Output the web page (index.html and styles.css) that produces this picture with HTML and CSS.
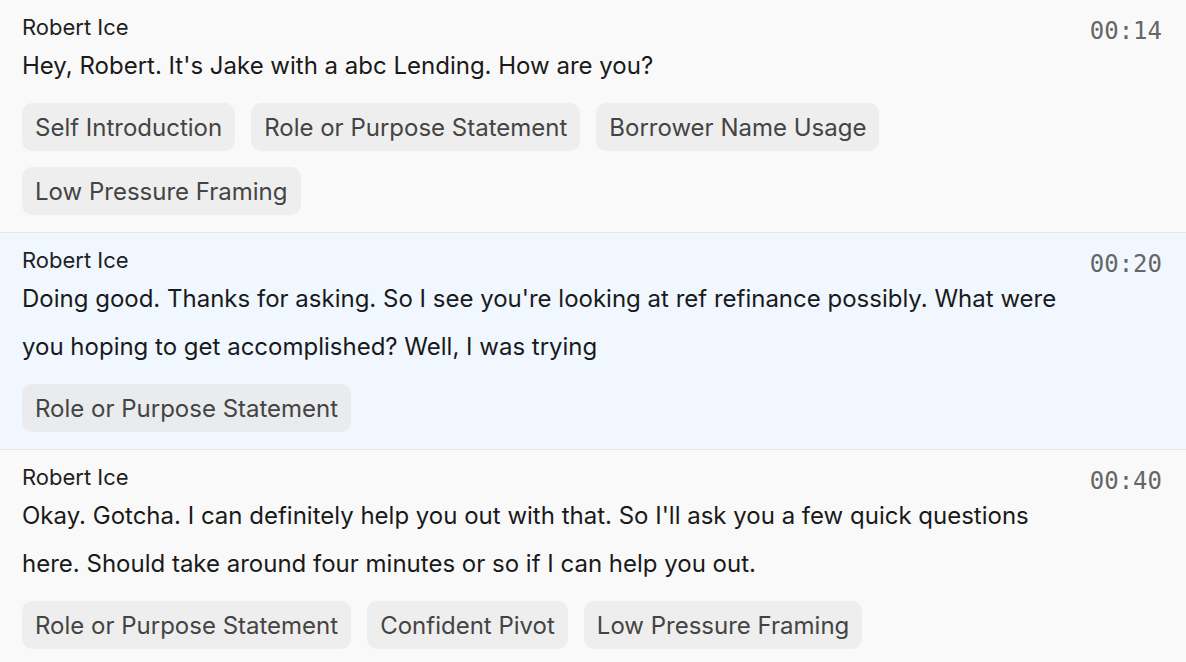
FILE: index.html
```html
<!DOCTYPE html>
<html lang="en">
<head>
<meta charset="utf-8">
<title>Transcript</title>
<link rel="stylesheet" href="styles.css">
</head>
<body>
<div class="transcript">
  <section class="turn">
    <div class="turn-main">
      <div class="speaker">Robert Ice</div>
      <p class="utterance">Hey, Robert. It's Jake with a abc Lending. How are you?</p>
      <div class="tags">
        <span class="tag">Self Introduction</span>
        <span class="tag">Role or Purpose Statement</span>
        <span class="tag">Borrower Name Usage</span>
        <span class="tag">Low Pressure Framing</span>
      </div>
    </div>
    <div class="time">00:14</div>
  </section>
  <section class="turn active">
    <div class="turn-main">
      <div class="speaker">Robert Ice</div>
      <p class="utterance">Doing good. Thanks for asking. So I see you're looking at ref refinance possibly. What were you hoping to get accomplished? Well, I was trying</p>
      <div class="tags">
        <span class="tag">Role or Purpose Statement</span>
      </div>
    </div>
    <div class="time">00:20</div>
  </section>
  <section class="turn">
    <div class="turn-main">
      <div class="speaker">Robert Ice</div>
      <p class="utterance">Okay. Gotcha. I can definitely help you out with that. So I'll ask you a few quick questions here. Should take around four minutes or so if I can help you out.</p>
      <div class="tags">
        <span class="tag">Role or Purpose Statement</span>
        <span class="tag">Confident Pivot</span>
        <span class="tag">Low Pressure Framing</span>
      </div>
    </div>
    <div class="time">00:40</div>
  </section>
</div>
</body>
</html>
```
FILE: styles.css
```css
* { box-sizing: border-box; }
html, body { margin: 0; padding: 0; }
body {
  background: #f9f9f9;
  font-family: Inter, "Noto Sans", sans-serif;
  color: #1a1a1a;
}
.transcript { display: flex; flex-direction: column; }
.turn {
  display: flex;
  gap: 24px;
  padding: 14px 24px 17px 22px;
  border-bottom: 1px solid #e8e8e8;
  background: #f9f9f9;
}
.turn.active { background: #f0f7ff; }
.turn-main { flex: 1; min-width: 0; }
.speaker {
  font-size: 22px;
  line-height: 26px;
  color: #1f1f1f;
}
.utterance {
  margin: 2px 0 0;
  font-size: 24px;
  line-height: 48px;
  color: #1a1a1a;
}
.tags {
  display: flex;
  flex-wrap: wrap;
  gap: 16px;
  margin-top: 13px;
}
.tag {
  display: inline-flex;
  align-items: center;
  height: 48px;
  padding: 0 13px;
  border-radius: 10px;
  background: #eeeeee;
  color: #444444;
  font-size: 24px;
}
.active .tag { background: #e9ebed; }
.time {
  font-family: "DejaVu Sans Mono", "Liberation Mono", monospace;
  font-size: 24px;
  line-height: 30px;
  color: #666666;
  margin-top: 2px;
}
```
